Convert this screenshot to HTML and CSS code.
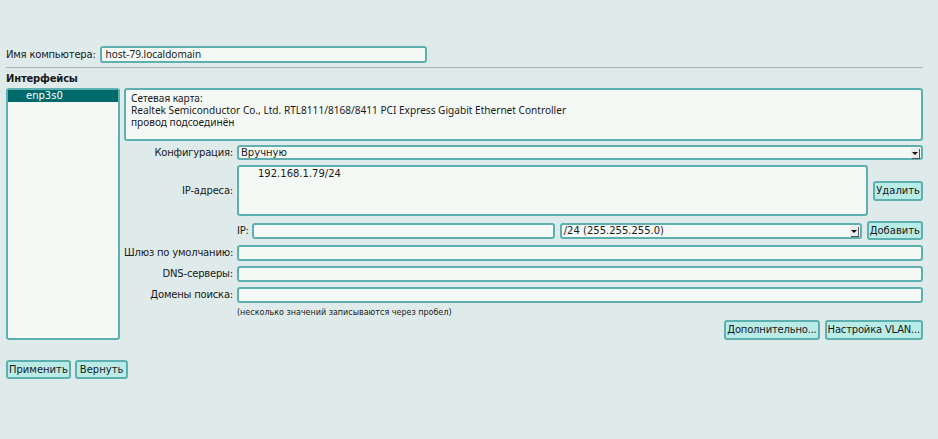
FILE: index.html
```html
<!DOCTYPE html>
<html lang="ru">
<head>
<meta charset="utf-8">
<link rel="stylesheet" href="styles.css">
</head>
<body>
<div class="page">
  <div class="host-row">
    <span class="lbl">Имя компьютера:</span>
    <div class="field host-input">host-79.localdomain</div>
  </div>
  <div class="rule"></div>
  <div class="section-title">Интерфейсы</div>
  <div class="main">
    <div class="iface-list">
      <div class="iface sel">enp3s0</div>
    </div>
    <div class="details">
      <div class="card">
        <div>Сетевая карта:</div>
        <div>Realtek Semiconductor Co., Ltd. RTL8111/8168/8411 PCI Express Gigabit Ethernet Controller</div>
        <div>провод подсоединён</div>
      </div>
      <div class="form">
        <span class="lbl right">Конфигурация:</span>
        <div class="field select cfg"><span class="val">Вручную</span><span class="arrow"></span></div>

        <span class="lbl right">IP-адреса:</span>
        <div class="iprow">
          <div class="field iplist"><div class="ipitem">192.168.1.79/24</div></div>
          <button class="btn">Удалить</button>
        </div>

        <span></span>
        <div class="addrow">
          <span class="lbl">IP:</span>
          <div class="field ipin"></div>
          <div class="field select mask"><span class="val">/24 (255.255.255.0)</span><span class="arrow"></span></div>
          <button class="btn">Добавить</button>
        </div>

        <span class="lbl right">Шлюз по умолчанию:</span>
        <div class="field line"></div>

        <span class="lbl right">DNS-серверы:</span>
        <div class="field line"></div>

        <span class="lbl right">Домены поиска:</span>
        <div class="field line"></div>

        <span></span>
        <div class="hint">(несколько значений записываются через пробел)</div>
      </div>
      <div class="extra">
        <button class="btn">Дополнительно...</button>
        <button class="btn">Настройка VLAN...</button>
      </div>
    </div>
  </div>
  <div class="bottom">
    <button class="btn">Применить</button>
    <button class="btn wide">Вернуть</button>
  </div>
</div>
</body>
</html>
```

FILE: styles.css
```css
html, body {
  margin: 0;
  padding: 0;
  background: #dfebeb;
}
body {
  font-family: "DejaVu Sans", sans-serif;
  font-size: 10px;
  color: #1a1a1a;
  width: 938px;
  height: 439px;
  overflow: hidden;
}
.page {
  padding: 46px 15px 0 6px;
}
.lbl {
  white-space: nowrap;
  line-height: 12px;
  letter-spacing: -0.2px;
}
.right {
  text-align: right;
  align-self: center;
}
.field {
  background: #f4f9f5;
  border: 2px solid #5eb0b0;
  border-radius: 3px;
  box-sizing: border-box;
}
.host-row {
  display: flex;
  align-items: center;
  gap: 4px;
  height: 17px;
}
.host-input {
  width: 327px;
  height: 17px;
  padding: 0 4px;
  font-family: "Noto Sans", sans-serif;
  font-size: 10px;
  line-height: 13px;
}
.rule {
  margin-top: 4px;
  border-top: 1px solid #a9b4b4;
}
.section-title {
  font-weight: bold;
  margin-top: 5px;
  line-height: 12px;
  letter-spacing: -0.2px;
}
.main {
  display: flex;
  gap: 4px;
  margin-top: 3px;
}
.iface-list {
  width: 114px;
  height: 252px;
  background: #f4f9f5;
  border: 2px solid #5eb0b0;
  border-radius: 3px;
  box-sizing: border-box;
  flex: none;
}
.iface {
  height: 12px;
  line-height: 12px;
  padding-left: 18px;
}
.iface.sel {
  background: #006a6a;
  color: #fff;
}
.details {
  flex: 1;
  display: flex;
  flex-direction: column;
}
.card {
  height: 53px;
  background: #f4f9f5;
  border: 2px solid #5eb0b0;
  border-radius: 3px;
  box-sizing: border-box;
  padding: 2px 5px;
  font-family: "Noto Sans", sans-serif;
  font-size: 10.1px;
  line-height: 12px;
}
.form {
  display: grid;
  grid-template-columns: 109px 1fr;
  column-gap: 4px;
  row-gap: 5px;
  margin-top: 4px;
}
.select {
  display: flex;
  align-items: center;
  justify-content: space-between;
  padding: 0 1px 0 2px;
  line-height: 12px;
}
.cfg {
  height: 15px;
}
.mask {
  height: 16px;
  flex: 1;
  margin-left: 2px;
}
.arrow {
  width: 8px;
  height: 10px;
  background: #e8ecea;
  box-shadow: 1px 1px 0 #555;
  position: relative;
  margin-right: 1px;
}
.arrow::after {
  content: "";
  position: absolute;
  left: 1px;
  top: 4px;
  border-left: 3px solid transparent;
  border-right: 3px solid transparent;
  border-top: 3px solid #111;
}
.iprow {
  display: flex;
  align-items: center;
  gap: 5px;
}
.iplist {
  flex: 1;
  height: 51px;
  padding: 1px 19px;
  line-height: 12px;
}
.addrow {
  display: flex;
  align-items: center;
  gap: 3px;
  height: 19px;
}
.addrow .btn {
  margin-left: 2px;
  height: 19px;
}
.ipin {
  width: 303px;
  height: 16px;
}
.line {
  height: 16px;
}
.hint {
  font-size: 8px;
  line-height: 10px;
  margin-top: 0;
}
.btn {
  font-family: "DejaVu Sans", sans-serif;
  font-size: 10px;
  color: #1a1a1a;
  background: #b9ebe7;
  border: 2px solid #5eb0b0;
  border-radius: 3px;
  height: 20px;
  padding: 0 1px;
  line-height: 14px;
  margin: 0;
}
.extra {
  display: flex;
  justify-content: flex-end;
  gap: 5px;
  margin-top: 2px;
}
.extra .btn {
  letter-spacing: -0.2px;
}
.bottom {
  display: flex;
  gap: 4px;
  margin-top: 20px;
}
.bottom .btn {
  height: 19px;
}
.bottom .wide {
  padding: 0 3px;
}
```
